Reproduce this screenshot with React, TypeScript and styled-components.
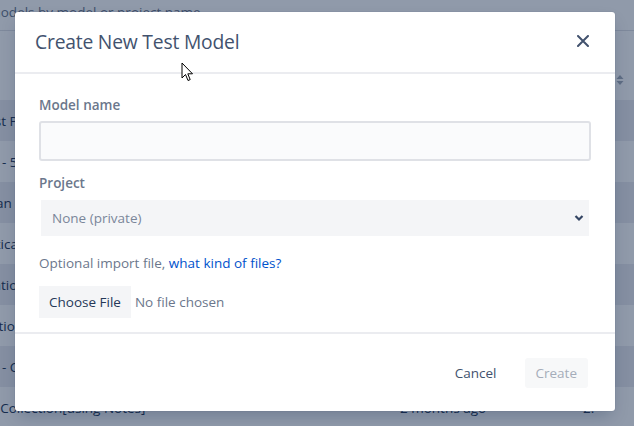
import React from 'react';
import styled, { createGlobalStyle } from 'styled-components';

const fontStack = `"Open Sans", "Noto Sans", "Liberation Sans", sans-serif`;

const GlobalStyle = createGlobalStyle`
  html, body {
    margin: 0;
    padding: 0;
    background: #ffffff;
  }
  body {
    font-family: ${fontStack};
    color: #172b4d;
  }
  * {
    box-sizing: border-box;
  }
`;

const Page = styled.div`
  position: relative;
  width: 634px;
  height: 426px;
  overflow: hidden;
  background: #ffffff;
`;

const SearchBar = styled.div`
  height: 31px;
  border-bottom: 1px solid #dfe1e6;
  display: flex;
  align-items: flex-start;
  padding-top: 3px;
`;

const SearchText = styled.span`
  margin-left: -58px;
  font-size: 13.5px;
  color: #6b778c;
  white-space: nowrap;
`;

const Table = styled.div`
  display: flex;
  flex-direction: column;
`;

const HeaderRow = styled.div`
  height: 69px;
  display: flex;
  align-items: flex-end;
  justify-content: flex-end;
  padding: 0 9px 14px 0;
`;

const SortIcon = styled.svg`
  width: 10px;
  height: 12px;
  color: #a5adba;
`;

const Row = styled.div<{ $striped: boolean }>`
  height: 41px;
  display: grid;
  grid-template-columns: 400px 183px 1fr;
  align-items: center;
  font-size: 13.5px;
  background: ${({ $striped }) => ($striped ? '#ebecf0' : '#ffffff')};
  white-space: nowrap;
`;

const NameCell = styled.span`
  margin-left: -50px;
  color: #253858;
`;

const Cell = styled.span`
  color: #253858;
`;

const Overlay = styled.div`
  position: absolute;
  inset: 0;
  background: rgba(9, 30, 66, 0.45);
  display: flex;
  align-items: flex-start;
  padding: 12px 0 0 15px;
`;

const Modal = styled.div`
  position: relative;
  width: 600px;
  height: 399px;
  background: #ffffff;
  border-radius: 3px;
  box-shadow: 0 8px 16px -4px rgba(9, 30, 66, 0.25), 0 0 1px rgba(9, 30, 66, 0.31);
  display: flex;
  flex-direction: column;
`;

const ModalHeader = styled.div`
  height: 62px;
  flex-shrink: 0;
  display: flex;
  align-items: center;
  justify-content: space-between;
  padding: 0 24px 2px 20px;
  border-bottom: 2px solid #ebecf0;
`;

const Title = styled.h1`
  margin: 0;
  font-size: 19.3px;
  font-weight: 500;
  color: #42526e;
  letter-spacing: -0.2px;
`;

const CloseButton = styled.button`
  width: 16px;
  height: 16px;
  padding: 0;
  border: none;
  background: none;
  display: flex;
  align-items: center;
  justify-content: center;
  color: #42526e;
  cursor: pointer;
`;

const ModalBody = styled.div`
  flex: 1;
  padding: 21px 24px 14px;
  display: flex;
  flex-direction: column;
  border-bottom: 2px solid #ebecf0;
`;

const Label = styled.label`
  display: block;
  font-size: 13.5px;
  line-height: 20px;
  font-weight: 600;
  color: #6b778c;
`;

const Field = styled.div<{ $gap?: number }>`
  display: flex;
  flex-direction: column;
  gap: ${({ $gap }) => $gap ?? 6}px;
  margin-bottom: 12px;
`;

const TextInput = styled.input`
  height: 40px;
  width: 100%;
  border: 2px solid #dfe1e6;
  border-radius: 3px;
  background: #fafbfc;
  font-family: ${fontStack};
  font-size: 13.5px;
  padding: 0 10px;
  outline: none;
`;

const SelectWrap = styled.div`
  position: relative;
  margin: 0 2px;
  height: 36px;
`;

const Select = styled.select`
  appearance: none;
  width: 100%;
  height: 100%;
  border: none;
  border-radius: 0;
  background: #f4f5f7;
  font-family: ${fontStack};
  font-size: 13.5px;
  color: #7a869a;
  padding: 0 11px;
  outline: none;
`;

const Chevron = styled.svg`
  position: absolute;
  right: 5px;
  top: 14px;
  width: 10px;
  height: 8px;
  pointer-events: none;
  color: #344563;
`;

const HelpText = styled.p`
  margin: 5px 0 13px;
  font-size: 13.5px;
  line-height: 20px;
  color: #6b778c;
`;

const Link = styled.a`
  color: #0052cc;
  text-decoration: none;
`;

const FileRow = styled.div`
  display: flex;
  align-items: center;
  gap: 4px;
`;

const FileButton = styled.button`
  height: 32px;
  padding: 0 10px;
  border: none;
  border-radius: 0;
  background: #f4f5f7;
  font-family: ${fontStack};
  font-size: 13.5px;
  color: #253858;
  cursor: pointer;
`;

const FileStatus = styled.span`
  font-size: 13.5px;
  color: #6b778c;
`;

const ModalFooter = styled.div`
  height: 77px;
  flex-shrink: 0;
  display: flex;
  align-items: center;
  justify-content: flex-end;
  padding: 0 27px 0 0;
  gap: 17px;
`;

const FooterButton = styled.button<{ $disabled?: boolean }>`
  height: 30px;
  padding: 0 11px;
  border: none;
  border-radius: 3px;
  font-family: ${fontStack};
  font-size: 13.5px;
  background: ${({ $disabled }) => ($disabled ? '#f7f8f9' : 'transparent')};
  color: ${({ $disabled }) => ($disabled ? '#a5adba' : '#42526e')};
  cursor: ${({ $disabled }) => ($disabled ? 'not-allowed' : 'pointer')};
`;

const Cursor = styled.svg`
  position: absolute;
  left: 181px;
  top: 62px;
  width: 13px;
  height: 20px;
  pointer-events: none;
`;

const rows = [
  { name: 'Unit Test Plan', updated: '1 month ago', count: '4' },
  { name: 'Release - 5.2', updated: '1 month ago', count: '7' },
  { name: 'Loan Plan', updated: '1 month ago', count: '3' },
  { name: 'Authentication', updated: '2 months ago', count: '5' },
  { name: 'Registration Flow', updated: '2 months ago', count: '6' },
  { name: 'Notifications', updated: '2 months ago', count: '2' },
  { name: 'Release - Cart', updated: '2 months ago', count: '8' },
  { name: 'Sample Collection[using Notes]', updated: '2 months ago', count: '2.' },
];

const App: React.FC = () => (
  <>
    <GlobalStyle />
    <Page>
      <SearchBar>
        <SearchText>Search models by model or project name</SearchText>
      </SearchBar>
      <Table>
        <HeaderRow>
          <SortIcon viewBox="0 0 10 12" fill="currentColor">
            <path d="M5 1 L8.5 5 H1.5 Z" />
            <path d="M5 11 L8.5 7 H1.5 Z" />
          </SortIcon>
        </HeaderRow>
        {rows.map((row, i) => (
          <Row key={row.name} $striped={i % 2 === 0}>
            <NameCell>{row.name}</NameCell>
            <Cell>{row.updated}</Cell>
            <Cell>{row.count}</Cell>
          </Row>
        ))}
      </Table>

      <Overlay>
        <Modal>
          <ModalHeader>
            <Title>Create New Test Model</Title>
            <CloseButton aria-label="Close">
              <svg width="12" height="12" viewBox="0 0 12 12">
                <path d="M1 1 L11 11 M11 1 L1 11" stroke="currentColor" strokeWidth="2" strokeLinecap="round" />
              </svg>
            </CloseButton>
          </ModalHeader>
          <ModalBody>
            <Field>
              <Label htmlFor="model-name">Model name</Label>
              <TextInput id="model-name" type="text" />
            </Field>
            <Field $gap={7}>
              <Label htmlFor="project">Project</Label>
              <SelectWrap>
                <Select id="project" defaultValue="none">
                  <option value="none">None (private)</option>
                </Select>
                <Chevron viewBox="0 0 10 8">
                  <path d="M1.5 2 L5 5.5 L8.5 2" fill="none" stroke="currentColor" strokeWidth="2.2" />
                </Chevron>
              </SelectWrap>
            </Field>
            <HelpText>
              Optional import file, <Link href="#">what kind of files?</Link>
            </HelpText>
            <FileRow>
              <FileButton type="button">Choose File</FileButton>
              <FileStatus>No file chosen</FileStatus>
            </FileRow>
          </ModalBody>
          <ModalFooter>
            <FooterButton type="button">Cancel</FooterButton>
            <FooterButton type="button" $disabled disabled>
              Create
            </FooterButton>
          </ModalFooter>
        </Modal>
      </Overlay>

      <Cursor viewBox="0 0 13 20">
        <path
          d="M1 1 L1 16 L4.5 12.5 L7 18.5 L9.2 17.6 L6.8 11.8 L11.5 11.8 Z"
          fill="#ffffff"
          stroke="#000000"
          strokeWidth="1"
          strokeLinejoin="round"
        />
      </Cursor>
    </Page>
  </>
);

export default App;
